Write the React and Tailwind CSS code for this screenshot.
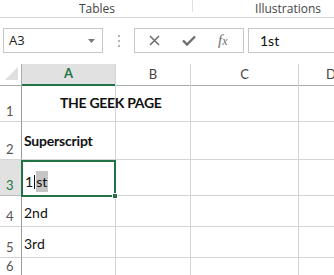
import React from 'react';

const cellFont = { fontFamily: 'Lato, "Noto Sans", sans-serif' };

const GRID = 'grid grid-cols-[22px_94px_75px_108px_1fr]';

const Cell = ({ className = 'items-end pb-[3px]', children }) => (
  <div className={`border-r border-b border-[#d4d4d4] flex px-[2px] overflow-visible whitespace-nowrap ${className}`}>
    {children}
  </div>
);

const RowHead = ({ n, selected }) => (
  <div
    className={`border-r border-b flex items-end justify-start pl-[6px] pb-[2px] text-[13px] leading-[16px] ${
      selected ? 'bg-[#e1e1e1] text-[#217346] border-b-[#bdbdbd] border-r-[#9b9b9b]' : 'text-[#555] border-b-[#d4d4d4] border-r-[#9b9b9b]'
    }`}
  >
    {n}
  </div>
);

const rows = [
  { n: 1, h: 'h-[38px]', center: true, a: <span className="font-bold pl-[36px] tracking-[-0.3px] text-[14px]">THE GEEK PAGE</span> },
  { n: 2, h: 'h-[38px]', center: true, a: <span className="font-bold tracking-[-0.2px] text-[14px]">Superscript</span> },
  { n: 3, h: 'h-[36px]', a: null, selected: true },
  { n: 4, h: 'h-[31px]', a: <span>2nd</span> },
  { n: 5, h: 'h-[31px]', a: <span>3rd</span> },
  { n: 6, h: 'h-[18px]', a: null },
];

export default function App() {
  return (
    <div className="w-[334px] h-[275px] overflow-hidden bg-white relative" style={{ fontFamily: '"Open Sans", "Noto Sans", sans-serif' }}>
      {/* ribbon group labels */}
      <div className="flex h-[18px] border-b border-[#d4d4d4] text-[12px] text-[#444]">
        <div className="w-[192px] flex justify-center items-end pl-[2px]">
          <span className="leading-[16px]">Tables</span>
        </div>
        <div className="w-px h-[12px] bg-[#e1e1e1]" />
        <div className="flex-1 flex justify-end items-end pr-[13px]">
          <span className="leading-[16px]">Illustrations</span>
        </div>
      </div>

      {/* formula bar */}
      <div className="flex items-center h-[46px] pl-[3px] pb-[1px]">
        <div className="w-[100px] h-[25px] border border-[#c6c6c6] flex items-center justify-between pl-[5px] pr-[7px] text-[13px] text-[#222]">
          <span>A3</span>
          <svg width="7" height="4" viewBox="0 0 7 4"><path d="M0 0h7L3.5 4z" fill="#7a7a7a" /></svg>
        </div>
        <div className="w-[31px] flex justify-center">
          <div className="flex flex-col gap-[3px]">
            <div className="w-[2px] h-[2px] bg-[#b5b5b5]" />
            <div className="w-[2px] h-[2px] bg-[#b5b5b5]" />
            <div className="w-[2px] h-[2px] bg-[#b5b5b5]" />
          </div>
        </div>
        <div className="w-[110px] h-[25px] border border-[#c6c6c6] flex items-center pl-[14px] gap-[22px]">
          <svg width="11" height="11" viewBox="0 0 11 11"><path d="M1 1l9 9M10 1l-9 9" stroke="#6e6e6e" strokeWidth="1.6" /></svg>
          <svg width="14" height="11" viewBox="0 0 14 11"><path d="M1 5.5l4 4L13 1.5" stroke="#6e6e6e" strokeWidth="2.4" fill="none" /></svg>
          <span className="italic text-[15px] text-[#6e6e6e] leading-none" style={{ fontFamily: '"Liberation Serif", serif' }}>f<span className="text-[12px]">x</span></span>
        </div>
        <div className="flex-1 ml-[4px] h-[25px] border border-r-0 border-[#c6c6c6] flex items-center pl-[11px] text-[14px] text-[#111]" style={cellFont}>
          1st
        </div>
      </div>

      {/* worksheet */}
      <div className="relative" style={cellFont}>
        <div className={`${GRID} h-[20px] text-[13px] text-[#444]`}>
          <div className="border-r border-b border-[#ababab] relative">
            <svg className="absolute left-[5px] top-[3px]" width="13" height="13" viewBox="0 0 13 13"><path d="M13 0V13H0z" fill="#dfdfdf" /></svg>
          </div>
          <div className="bg-[#e1e1e1] border-b-2 border-[#217346] border-r border-r-[#d4d4d4] flex items-center justify-center font-bold text-[#217346]">A</div>
          <div className="border-r border-b border-[#ababab] border-r-[#d4d4d4] flex items-center justify-center">B</div>
          <div className="border-r border-b border-[#ababab] border-r-[#d4d4d4] flex items-center justify-center">C</div>
          <div className="border-b border-[#ababab] flex items-center pl-[27px]">D</div>
        </div>

        {rows.map((r) => (
          <div key={r.n} className={`${GRID} ${r.h} text-[14px] text-[#111]`}>
            <RowHead n={r.n} selected={r.selected} />
            <Cell className={r.center ? 'items-center' : 'items-end pb-[3px]'}>
              {r.selected ? (
                <span className="pl-[1px] flex items-center">
                  1<span className="w-px h-[14px] bg-[#111] mx-[1px]" />
                  <span className="bg-[#c6c6c6] pr-[1px]">st</span>
                </span>
              ) : (
                r.a
              )}
            </Cell>
            <Cell />
            <Cell />
            <div className="border-b border-[#d4d4d4]" />
          </div>
        ))}

        {/* active cell selection */}
        <div className="absolute left-[21px] top-[96px] w-[95px] h-[37px] border-2 border-[#217346] pointer-events-none" />
        <div className="absolute left-[112px] top-[129px] w-[6px] h-[6px] bg-[#217346] border border-white" />
      </div>
    </div>
  );
}
